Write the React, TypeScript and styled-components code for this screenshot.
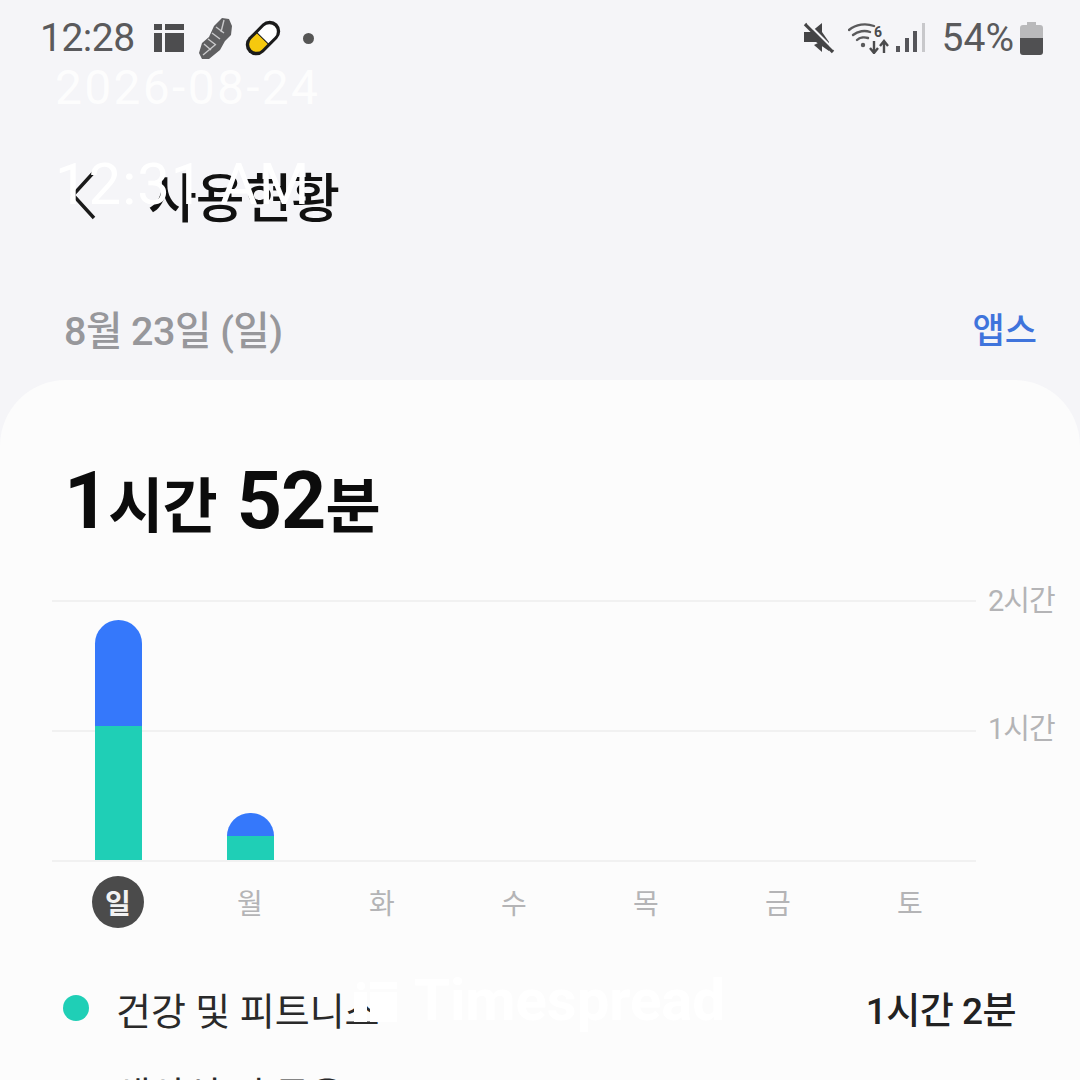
import React from "react"
import styled, { createGlobalStyle } from "styled-components"

const font = `Roboto, "Noto Sans CJK KR", sans-serif`

const GlobalStyle = createGlobalStyle`
    html, body {
        margin: 0;
        padding: 0;
        background: #f5f5f8;
    }
`

const Screen = styled.div`
    position: relative;
    width: 1080px;
    height: 1080px;
    overflow: hidden;
    background: #f5f5f8;
    font-family: ${font};
    display: flex;
    flex-direction: column;
`

const StatusBar = styled.div`
    height: 76px;
    padding: 0 37px 0 40px;
    display: flex;
    align-items: center;
    justify-content: space-between;
    flex-shrink: 0;
`

const StatusGroup = styled.div`
    display: flex;
    align-items: center;
`

const Clock = styled.span`
    font-size: 39px;
    color: #5a5a5c;
    letter-spacing: -0.5px;
    margin-right: 18px;
`

const Battery = styled.span`
    font-size: 39px;
    color: #5a5a5c;
    margin: 0 6px 0 16px;
`

const NavBar = styled.div`
    height: 116px;
    margin-top: 61px;
    padding: 0 0 0 70px;
    display: flex;
    align-items: center;
    gap: 50px;
    flex-shrink: 0;
`

const Title = styled.h1`
    margin: 0;
    font-size: 53px;
    font-weight: 500;
    color: #111;
    letter-spacing: -1px;
`

const DateRow = styled.div`
    height: 78px;
    margin-top: 35px;
    padding: 0 43px 0 64px;
    display: flex;
    align-items: center;
    justify-content: space-between;
    flex-shrink: 0;
`

const DateText = styled.span`
    font-size: 39.5px;
    font-weight: 500;
    color: #97979b;
    letter-spacing: -0.5px;
`

const AppsLink = styled.span`
    font-size: 35px;
    font-weight: 500;
    color: #3f74dc;
`

const Card = styled.div`
    flex: 1;
    margin-top: 14px;
    background: #fcfcfc;
    border-radius: 66px 66px 0 0;
    padding: 75px 0 0;
`

const Total = styled.div`
    padding-left: 64px;
    display: flex;
    align-items: baseline;
    color: #0c0c0c;
    font-weight: 700;
    height: 96px;
`

const TotalNumber = styled.span`
    font-size: 79px;
    letter-spacing: -1px;
`

const TotalUnit = styled.span<{ $gap?: boolean }>`
    font-size: 60px;
    font-weight: 700;
    margin-right: ${({ $gap }) => ($gap ? "20px" : "0")};
    letter-spacing: -1px;
`

const Chart = styled.div`
    margin-top: 49px;
    padding-left: 52px;
`

const Plot = styled.div`
    position: relative;
    width: 924px;
    height: 258px;
    border-top: 2px solid #f1f1f1;
    border-bottom: 2px solid #f1f1f1;
    display: grid;
    grid-template-columns: repeat(7, 132px);
    background: linear-gradient(#f1f1f1, #f1f1f1) 0 128px / 100% 2px no-repeat;
`

const AxisLabel = styled.span<{ $top: number }>`
    position: absolute;
    left: 936px;
    top: ${({ $top }) => $top}px;
    font-size: 29px;
    color: #b4b4b6;
    letter-spacing: -1px;
    line-height: 34px;
    white-space: nowrap;
`

const BarSlot = styled.div`
    display: flex;
    flex-direction: column;
    justify-content: flex-end;
    align-items: center;
`

const BarTop = styled.div`
    width: 47px;
    background: #3578fb;
    border-radius: 24px 24px 0 0;
`

const BarBottom = styled.div`
    width: 47px;
    background: #1fcfb6;
`

const Days = styled.div`
    width: 924px;
    display: grid;
    grid-template-columns: repeat(7, 132px);
    margin-top: 14px;
`

const Day = styled.div<{ $active?: boolean }>`
    justify-self: center;
    width: 52px;
    height: 52px;
    border-radius: 50%;
    display: flex;
    align-items: center;
    justify-content: center;
    font-size: 28px;
    font-weight: ${({ $active }) => ($active ? 700 : 400)};
    color: ${({ $active }) => ($active ? "#f2f2f2" : "#b4b4b6")};
    background: ${({ $active }) => ($active ? "#4b4b4b" : "transparent")};
`

const Legend = styled.div`
    margin-top: 50px;
    padding: 0 64px 0 63px;
`

const LegendRow = styled.div`
    height: 60px;
    display: flex;
    align-items: center;
    font-size: 38px;
    color: #2a2a2a;
`

const Dot = styled.span<{ $color: string }>`
    width: 26px;
    height: 26px;
    border-radius: 50%;
    background: ${({ $color }) => $color};
    margin-right: 27px;
    flex-shrink: 0;
`

const LegendName = styled.span`
    flex: 1;
`

const LegendValue = styled.span`
    font-weight: 500;
    font-size: 37px;
    color: #222;
    letter-spacing: -0.5px;
`

const NextRow = styled(LegendRow)`
    margin-top: 24px;
    padding-left: 53px;
`

const Stamp = styled.span<{ $x: number; $y: number; $size: number; $spacing: number; $opacity?: number }>`
    position: absolute;
    left: ${({ $x }) => $x}px;
    top: ${({ $y }) => $y}px;
    font-size: ${({ $size }) => $size}px;
    letter-spacing: ${({ $spacing }) => $spacing}px;
    line-height: 1;
    color: #fff;
    opacity: ${({ $opacity = 1 }) => $opacity};
    white-space: nowrap;
    font-family: Roboto, sans-serif;
`

const BrandMark = styled.svg`
    position: absolute;
    left: 354px;
    top: 982px;
`

const BrandText = styled.span`
    position: absolute;
    left: 414px;
    top: 968px;
    font-family: Roboto, sans-serif;
    font-size: 58px;
    font-weight: 700;
    line-height: 64px;
    color: #fff;
    white-space: nowrap;
`

const BarsIcon = () => (
    <svg width="32" height="30" viewBox="0 0 32 30" style={{ marginRight: 13 }}>
        <path
            fill="#4d4d4f"
            d="M1 1h8v6H1zM12 1h19v6H12zM1 10h8v19H1zM12 10h19v19H12z"
        />
    </svg>
)

const ShoeIcon = () => (
    <svg width="34" height="42" viewBox="0 0 34 42" style={{ marginRight: 12 }}>
        <path
            fill="#5f5f61"
            d="M1 36l3-10 7-6 5-11 8-8 7 1 3 7-1 9-6 6-5 9-11 9H4z"
        />
        <path
            stroke="#c9c9cb"
            strokeWidth="1.4"
            fill="none"
            d="M6 27l7 6M10 22l8 6M14 16l8 6M18 10l8 6M26 3l-3 12M5 38l12-10"
        />
    </svg>
)

const PillIcon = () => (
    <svg width="38" height="40" viewBox="0 0 38 40" style={{ marginRight: 21 }}>
        <g transform="rotate(45 19 20)">
            <rect x="8.5" y="0" width="21" height="40" rx="10.5" fill="#1b1b1b" />
            <path d="M11.5 20v-9a7.5 7.5 0 0 1 15 0v9z" fill="#fff" />
            <path d="M11.5 21v8a7.5 7.5 0 0 0 15 0v-8z" fill="#f6c90e" />
        </g>
    </svg>
)

const MoreDot = styled.span`
    width: 11px;
    height: 11px;
    border-radius: 50%;
    background: #555;
`

const MuteIcon = () => (
    <svg width="32" height="32" viewBox="0 0 32 32" style={{ marginRight: 13 }}>
        <path fill="#444446" d="M1 10h7L19 1v9L26 20v9L13 20H1z" />
        <path fill="#444446" d="M19 19v11l-8-7z" />
        <path stroke="#444446" strokeWidth="3.4" d="M2 2l28 28" />
        <path stroke="#f5f5f8" strokeWidth="2" d="M4.500 1l26 26" />
    </svg>
)

const WifiIcon = () => (
    <svg width="42" height="32" viewBox="0 0 42 32" style={{ marginRight: 6 }}>
        <g fill="none" stroke="#5a5a5c" strokeWidth="2.4" strokeLinecap="round">
            <path d="M1 8C8 2 18 1 26 4" />
            <path d="M5 13c5-4 12-5 17-3" />
            <path d="M9 18c3-3 8-3 11-2" />
        </g>
        <circle cx="15" cy="23" r="2.2" fill="#5a5a5c" />
        <text x="26" y="15" fontSize="14" fontWeight="700" fill="#4a4a4c" fontFamily="Roboto, sans-serif">
            6
        </text>
        <path
            d="M26 19v11M22 26l4 5 4-5M36 31V20M32 24l4-5 4 5"
            fill="none"
            stroke="#4a4a4c"
            strokeWidth="2.4"
        />
    </svg>
)

const SignalIcon = () => (
    <svg width="30" height="30" viewBox="0 0 30 30">
        <rect x="0" y="23" width="4" height="6" fill="#55555a" />
        <rect x="9" y="15" width="4" height="14" fill="#55555a" />
        <rect x="17" y="8" width="4" height="21" fill="#55555a" />
        <rect x="26" y="0" width="3" height="29" fill="#c8c8cb" />
    </svg>
)

const BatteryIcon = () => (
    <svg width="23" height="33" viewBox="0 0 23 33">
        <path fill="#b9b9bb" d="M7 0h9v3h4a3 3 0 0 1 3 3v10H0V6a3 3 0 0 1 3-3h4z" />
        <path fill="#505052" d="M0 16h23v14a3 3 0 0 1-3 3H3a3 3 0 0 1-3-3z" />
    </svg>
)

const ChevronIcon = () => (
    <svg width="28" height="50" viewBox="0 0 28 50">
        <path d="M24 2L3 25l21 23" fill="none" stroke="#1a1a1a" strokeWidth="3.4" />
    </svg>
)

const days = ["일", "월", "화", "수", "목", "금", "토"]
const usage = [
    { top: 106, bottom: 134 },
    { top: 23, bottom: 24 },
]

const App = (): JSX.Element => (
    <Screen>
        <GlobalStyle />
        <StatusBar>
            <StatusGroup>
                <Clock>12:28</Clock>
                <BarsIcon />
                <ShoeIcon />
                <PillIcon />
                <MoreDot />
            </StatusGroup>
            <StatusGroup>
                <MuteIcon />
                <WifiIcon />
                <SignalIcon />
                <Battery>54%</Battery>
                <BatteryIcon />
            </StatusGroup>
        </StatusBar>
        <NavBar>
            <ChevronIcon />
            <Title>사용현황</Title>
        </NavBar>
        <DateRow>
            <DateText>8월 23일 (일)</DateText>
            <AppsLink>앱스</AppsLink>
        </DateRow>
        <Card>
            <Total>
                <TotalNumber>1</TotalNumber>
                <TotalUnit $gap>시간</TotalUnit>
                <TotalNumber>52</TotalNumber>
                <TotalUnit>분</TotalUnit>
            </Total>
            <Chart>
                <Plot>
                    {days.map((day, i) => (
                        <BarSlot key={day}>
                            {usage[i] && (
                                <>
                                    <BarTop style={{ height: usage[i].top }} />
                                    <BarBottom style={{ height: usage[i].bottom }} />
                                </>
                            )}
                        </BarSlot>
                    ))}
                    <AxisLabel $top={-18}>2시간</AxisLabel>
                    <AxisLabel $top={110}>1시간</AxisLabel>
                </Plot>
                <Days>
                    {days.map((day, i) => (
                        <Day key={day} $active={i === 0}>
                            {day}
                        </Day>
                    ))}
                </Days>
            </Chart>
            <Legend>
                <LegendRow>
                    <Dot $color="#1fcfb6" />
                    <LegendName>건강 및 피트니스</LegendName>
                    <LegendValue>1시간 2분</LegendValue>
                </LegendRow>
                <NextRow>
                    <LegendName>생산성 및 금융</LegendName>
                </NextRow>
            </Legend>
        </Card>
        <Stamp $x={55} $y={64} $size={48} $spacing={2.3} $opacity={0.85}>
            2026-08-24
        </Stamp>
        <Stamp $x={55} $y={155} $size={58} $spacing={1}>
            12:31 AM
        </Stamp>
        <BrandMark width="44" height="40" viewBox="0 0 44 40">
            <circle cx="7" cy="4" r="4" fill="#fff" />
            <path fill="#fff" d="M16 0h27v7H16zM0 10h13v30H0zM16 10h27v30H16z" />
        </BrandMark>
        <BrandText>Timespread</BrandText>
    </Screen>
)

export default App
